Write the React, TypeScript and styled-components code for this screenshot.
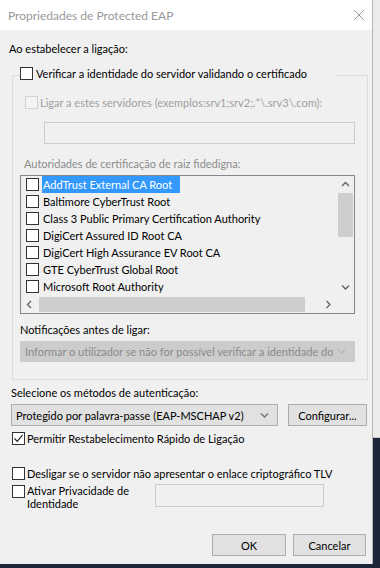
import React from 'react';
import styled, { createGlobalStyle } from 'styled-components';

const Global = createGlobalStyle`
  html, body { margin: 0; padding: 0; }
  body { background: #1b2638; font-family: Lato, "Open Sans", sans-serif; font-size: 11px; color: #000; }
  * { box-sizing: border-box; }
`;

const Screen = styled.div`
  width: 380px;
  height: 568px;
  display: flex;
  align-items: flex-start;
  background: #1b2638;
  overflow: hidden;
`;

const Side = styled.div`
  width: 7px;
  height: 438px;
  background: #ececec;
  border-bottom: 1px solid #c8c8c8;
`;

const Window = styled.div`
  width: 373px;
  height: 564px;
  background: #f0f0f0;
  border-right: 1px solid #b4b4b4;
  display: flex;
  flex-direction: column;
`;

const TitleBar = styled.div`
  height: 30px;
  flex: none;
  background: #fff;
  display: flex;
  align-items: center;
  justify-content: space-between;
  padding: 0 7px 0 8px;
  font-size: 12px;
  color: #999;
`;

const Body = styled.div`
  display: flex;
  flex-direction: column;
  flex: 1;
`;

const Label = styled.div<{ $x: number; $top: number; $muted?: boolean }>`
  margin-left: ${p => p.$x}px;
  margin-top: ${p => p.$top}px;
  line-height: 16px;
  height: 16px;
  white-space: nowrap;
  color: ${p => (p.$muted ? '#8c8c8c' : '#000')};
`;

const Group = styled.div`
  margin: 18px 0 0 12px;
  width: 356px;
  height: 305px;
  flex: none;
  border: 1px solid #dcdcdc;
  display: flex;
  flex-direction: column;
`;

const Legend = styled.div`
  margin: -11px 0 0 7px;
  width: 317px;
  height: 16px;
  background: #f0f0f0;
  display: flex;
  align-items: center;
  gap: 3px;
  white-space: nowrap;
`;

const Row = styled.div<{ $x: number; $top: number; $muted?: boolean; $gap?: number }>`
  margin-left: ${p => p.$x}px;
  margin-top: ${p => p.$top}px;
  height: 16px;
  display: flex;
  align-items: center;
  gap: ${p => p.$gap ?? 2}px;
  white-space: nowrap;
  color: ${p => (p.$muted ? '#a0a0a0' : '#000')};
`;

const Box = styled.span<{ $checked?: boolean; $disabled?: boolean; $drop?: number }>`
  width: 13px;
  height: 13px;
  flex: none;
  margin-top: ${p => p.$drop ?? 0}px;
  border: 1px solid ${p => (p.$disabled ? '#d2d2d2' : '#333')};
  background: ${p => (p.$disabled ? '#f4f4f4' : '#fff')};
  display: flex;
  align-items: center;
  justify-content: center;
`;

const TextInput = styled.div<{ $x: number; $top: number; $w: number; $h: number }>`
  margin-left: ${p => p.$x}px;
  margin-top: ${p => p.$top}px;
  width: ${p => p.$w}px;
  height: ${p => p.$h}px;
  flex: none;
  border: 1px solid #cccccc;
  background: #f0f0f0;
`;

const ListBox = styled.div`
  margin: 3px 0 0 7px;
  width: 335px;
  height: 139px;
  flex: none;
  border: 1px solid #828790;
  background: #f0f0f0;
  display: grid;
  grid-template-columns: 1fr 17px;
  grid-template-rows: 1fr 17px;
`;

const Items = styled.div`
  display: flex;
  flex-direction: column;
  overflow: hidden;
`;

const Item = styled.div`
  height: 17px;
  flex: none;
  display: flex;
  align-items: center;
  padding-left: 5px;
  white-space: nowrap;
`;

const ItemText = styled.span<{ $selected?: boolean }>`
  margin-left: 3px;
  padding: 0 1px;
  height: 17px;
  line-height: 17px;
  background: ${p => (p.$selected ? '#3399ff' : 'transparent')};
  color: ${p => (p.$selected ? '#fff' : '#000')};
  min-width: ${p => (p.$selected ? '138px' : '0')};
`;

const VScroll = styled.div`
  display: flex;
  flex-direction: column;
  background: #f0f0f0;
`;

const HScroll = styled.div`
  display: flex;
  align-items: center;
  background: #f0f0f0;
`;

const Arrow = styled.div`
  width: 17px;
  height: 17px;
  flex: none;
  display: flex;
  align-items: center;
  justify-content: center;
`;

const VThumb = styled.div`
  margin: 0 auto;
  width: 15px;
  height: 44px;
  background: #cdcdcd;
`;

const Track = styled.div`
  flex: 1;
`;

const HThumb = styled.div`
  margin-left: 1px;
  width: 266px;
  height: 15px;
  background: #cdcdcd;
`;

const Corner = styled.div`
  background: #f0f0f0;
`;

const Select = styled.div<{ $x: number; $top: number; $w: number; $h: number; $disabled?: boolean }>`
  margin-left: ${p => p.$x}px;
  margin-top: ${p => p.$top}px;
  width: ${p => p.$w}px;
  height: ${p => p.$h}px;
  flex: none;
  border: 1px solid ${p => (p.$disabled ? '#cccccc' : '#adadad')};
  background: ${p => (p.$disabled ? '#cccccc' : '#e1e1e1')};
  color: ${p => (p.$disabled ? '#8a8a8a' : '#000')};
  display: flex;
  align-items: center;
  justify-content: space-between;
  gap: 4px;
  padding: 0 8px 0 4px;
  white-space: nowrap;
  overflow: hidden;
  svg { flex: none; }
`;

const SelectText = styled.span`
  overflow: hidden;
  flex: 1;
`;

const MethodRow = styled.div`
  margin: 3px 0 0 11px;
  display: flex;
  align-items: center;
  gap: 10px;
`;

const Button = styled.div<{ $w: number }>`
  width: ${p => p.$w}px;
  height: 22px;
  flex: none;
  border: 1px solid #adadad;
  background: #e1e1e1;
  display: flex;
  align-items: center;
  justify-content: center;
  white-space: nowrap;
`;

const PrivacyRow = styled.div`
  margin: 3px 0 0 12px;
  display: flex;
  align-items: flex-start;
`;

const PrivacyText = styled.div`
  margin-left: 2px;
  width: 128px;
  line-height: 13px;
`;

const Footer = styled.div`
  margin-top: 24px;
  padding-right: 6px;
  display: flex;
  justify-content: flex-end;
  gap: 7px;
`;

const Chevron = ({ dir, color = '#606060' }: { dir: 'up' | 'down' | 'left' | 'right'; color?: string }) => {
  const d = {
    up: 'M1 5 L4.5 1.5 L8 5',
    down: 'M1 1.5 L4.5 5 L8 1.5',
    left: 'M5 1 L1.5 4.5 L5 8',
    right: 'M1.5 1 L5 4.5 L1.5 8',
  }[dir];
  const horiz = dir === 'left' || dir === 'right';
  return (
    <svg width={horiz ? 7 : 9} height={horiz ? 9 : 7} viewBox={horiz ? '0 0 7 9' : '0 0 9 7'}>
      <path d={d} fill="none" stroke={color} strokeWidth="1.3" />
    </svg>
  );
};

const Check = () => (
  <svg width="11" height="11" viewBox="0 0 11 11">
    <path d="M1.5 5.5 L4.2 8.3 L9.5 2.2" fill="none" stroke="#222" strokeWidth="1.2" />
  </svg>
);

const Close = () => (
  <svg width="12" height="12" viewBox="0 0 12 12">
    <path d="M1 1 L11 11 M11 1 L1 11" stroke="#9a9a9a" strokeWidth="1" />
  </svg>
);

const certs = [
  'AddTrust External CA Root',
  'Baltimore CyberTrust Root',
  'Class 3 Public Primary Certification Authority',
  'DigiCert Assured ID Root CA',
  'DigiCert High Assurance EV Root CA',
  'GTE CyberTrust Global Root',
  'Microsoft Root Authority',
];

export default function App() {
  return (
    <>
      <Global />
      <Screen>
        <Window>
          <TitleBar>
            <span>Propriedades de Protected EAP</span>
            <Close />
          </TitleBar>
          <Body>
            <Label $x={9} $top={11}>Ao estabelecer a ligação:</Label>
            <Group>
              <Legend>
                <Box />
                <span>Verificar a identidade do servidor validando o certificado</span>
              </Legend>
              <Row $x={12} $top={13} $muted>
                <Box $disabled />
                <span>Ligar a estes servidores (exemplos:srv1;srv2;.*\.srv3\.com):</span>
              </Row>
              <TextInput $x={31} $top={12} $w={311} $h={22} />
              <Label $x={11} $top={12} $muted>Autoridades de certificação de raiz fidedigna:</Label>
              <ListBox>
                <Items>
                  {certs.map((c, i) => (
                    <Item key={c}>
                      <Box />
                      <ItemText $selected={i === 0}>{c}</ItemText>
                    </Item>
                  ))}
                </Items>
                <VScroll>
                  <Arrow><Chevron dir="up" /></Arrow>
                  <VThumb />
                  <Track />
                  <Arrow><Chevron dir="down" /></Arrow>
                </VScroll>
                <HScroll>
                  <Arrow><Chevron dir="left" /></Arrow>
                  <HThumb />
                  <Track />
                  <Arrow><Chevron dir="right" /></Arrow>
                </HScroll>
                <Corner />
              </ListBox>
              <Label $x={7} $top={8}>Notificações antes de ligar:</Label>
              <Select $x={7} $top={3} $w={335} $h={21} $disabled>
                <SelectText>Informar o utilizador se não for possível verificar a identidade do</SelectText>
                <Chevron dir="down" color="#b8b8b8" />
              </Select>
            </Group>
            <Label $x={11} $top={5}>Selecione os métodos de autenticação:</Label>
            <MethodRow>
              <Select $x={0} $top={0} $w={267} $h={22}>
                <SelectText>Protegido por palavra-passe (EAP-MSCHAP v2)</SelectText>
                <Chevron dir="down" color="#707070" />
              </Select>
              <Button $w={79}>Configurar...</Button>
            </MethodRow>
            <Row $x={12} $top={4}>
              <Box $checked><Check /></Box>
              <span>Permitir Restabelecimento Rápido de Ligação</span>
            </Row>
            <Row $x={12} $top={19}>
              <Box />
              <span>Desligar se o servidor não apresentar o enlace criptográfico TLV</span>
            </Row>
            <PrivacyRow>
              <Box $drop={1} />
              <PrivacyText>Ativar Privacidade de Identidade</PrivacyText>
              <TextInput $x={0} $top={0} $w={169} $h={23} />
            </PrivacyRow>
            <Footer>
              <Button $w={74}>OK</Button>
              <Button $w={73}>Cancelar</Button>
            </Footer>
          </Body>
        </Window>
        <Side />
      </Screen>
    </>
  );
}
